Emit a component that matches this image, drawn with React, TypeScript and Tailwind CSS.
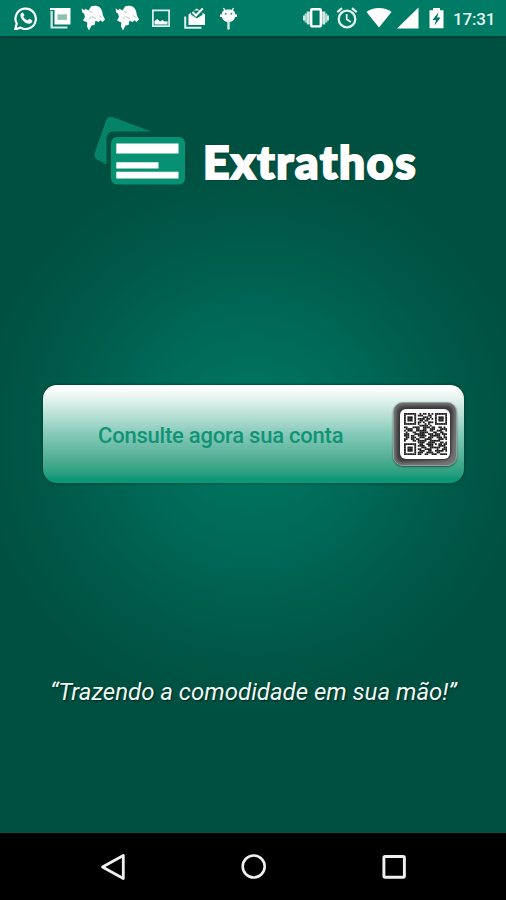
import React from 'react';

interface IconProps {
    className?: string;
}

const WhatsAppIcon: React.FC<IconProps> = ({ className }) => (
    <svg className={className} width="24" height="24" viewBox="0 0 24 24">
        <path d="M1.2 23.4 2.7 17.6A10.2 10.2 0 1 1 6.6 21.6Z" fill="none" stroke="white" strokeWidth="2.2" strokeLinejoin="round" />
        <path d="M8.3 6.7c-.6 0-1.6.9-1.6 2.5 0 3.7 4.6 8.5 8.5 8.3 1.6-.1 2.8-1.1 2.8-2.5 0-.7-.2-.8-2.5-1.8-.6-.2-.8.1-1.6 1.2-.3.4-.7.2-1.6-.3-1.400-.8-2.400-1.900-3.100-3.200-.2-.5.9-1 .9-1.800C9.900 8.500 9.300 6.700 8.300 6.700Z" fill="white" stroke="white" strokeWidth=".5" />
    </svg>
);

const NewsIcon: React.FC<IconProps> = ({ className }) => (
    <svg className={className} width="21" height="24" viewBox="0 0 21 24">
        <path d="M.5 4.5 2.800 5.200V20.600H17.500V22.500H.5Z" fill="#cfe8e1" />
        <path d="M0 2h5v2H0ZM4.500 2H20.500V18.500H4.500Z" fill="white" />
        <path d="M7.500 8.500h9.500v5H7.500Z" fill="#9fcabf" />
        <path d="M7.500 9.200h9.500M7.500 11.200h9.500M7.500 13.200h9.500" stroke="#74aea0" strokeWidth=".8" />
    </svg>
);

const BirdIcon: React.FC<IconProps> = ({ className }) => (
    <svg className={className} width="24" height="26" viewBox="0 0 24 26">
        <path d="M.7 3.300 3 5.200 4.500 3.800 7.500 5.500 10 1.500C12.500.4 16 .6 18.300 2 20.500 3.500 21.500 6.500 21.800 10L24 14.500 21.500 17 19.500 15.300 17.500 17 14.500 15.800 13.500 20 10.500 20.500 8 25.500 6 21.500 6.300 17.500 2 15.500 4 12 3 8.500 1 7.200Z" fill="white" />
        <path d="M9 6.500 11.500 7.500M7.500 14.500 10.500 11.500 15 13.500M18 10.500 21 12.500" fill="none" stroke="#9fcabf" strokeWidth=".9" />
    </svg>
);

const PictureIcon: React.FC<IconProps> = ({ className }) => (
    <svg className={className} width="18" height="24" viewBox="0 0 18 24">
        <path d="M.9 4.3H17.1V20.2H.9Z" fill="none" stroke="#e2f1ed" strokeWidth="1.7" />
        <path d="M2.5 18.500V15L5.500 13 8 15.500 10.500 14 12.500 15.500 15.500 15.200V18.500Z" fill="white" />
    </svg>
);

const InboxIcon: React.FC<IconProps> = ({ className }) => (
    <svg className={className} width="22" height="24" viewBox="0 0 22 24">
        <path d="M1.2 10.500V21.700H17.500" fill="none" stroke="#e2f1ed" strokeWidth="2" />
        <path d="M4.500 8.500 12.800 2.500 21 8.500V19H4.500Z" fill="white" />
        <path d="M7 4.500H18.500V9L12.800 13 7 9Z" fill="#007b66" />
        <path d="M6.500 9 12.800 13 19.500 9" fill="none" stroke="#e2f1ed" strokeWidth="1.300" />
        <path d="M8.500 6 12 9.500 18.800 2.500" fill="none" stroke="white" strokeWidth="2" />
    </svg>
);

const DebugIcon: React.FC<IconProps> = ({ className }) => (
    <svg className={className} width="17" height="24" viewBox="0 0 17 24">
        <path d="M3.5 2 5.300 5M13.500 2 11.700 5" stroke="white" strokeWidth="1.300" />
        <path d="M3.500 4.500C6 3 11 3 13.500 4.500 15.300 6 15.500 8 15.200 10.500 14.500 14.200 12 16 8.500 16S2.500 14.200 1.800 10.500C1.500 8 1.700 6 3.500 4.500Z" fill="white" />
        <path d="M0 8.500h2.500v2.500H0ZM14.500 8.500h2.500v2.500H14.500Z" fill="white" />
        <path d="M8.500 15.500V22.500" stroke="#cfe8e1" strokeWidth="2.500" strokeLinecap="round" />
        <circle cx="5.700" cy="7.800" r="1" fill="#3d9482" />
        <circle cx="11.300" cy="7.800" r="1" fill="#3d9482" />
    </svg>
);

const VibrateIcon: React.FC<IconProps> = ({ className }) => (
    <svg className={className} width="26" height="24" viewBox="0 0 26 24">
        <rect x="8.200" y="3.200" width="9.600" height="17.200" rx="1" fill="none" stroke="white" strokeWidth="2.400" />
        <path d="M5.300 5.500V18.500M20.700 5.500V18.500" stroke="#cfe8e1" strokeWidth="3" />
        <path d="M2.800 7.500V16.500M23.200 7.500V16.500" stroke="#b5d9cf" strokeWidth="2.200" />
        <path d="M1 9.500V14.500M25 9.500V14.500" stroke="white" strokeWidth="1.600" />
    </svg>
);

const AlarmIcon: React.FC<IconProps> = ({ className }) => (
    <svg className={className} width="22" height="24" viewBox="0 0 22 24">
        <circle cx="11" cy="13" r="8.300" fill="none" stroke="#e2f1ed" strokeWidth="2.300" />
        <path d="M1.300 6.200 6 2.200M20.700 6.200 16 2.200" stroke="#e2f1ed" strokeWidth="2.200" />
        <path d="M10.700 8V13.300L14.800 16" fill="none" stroke="#e2f1ed" strokeWidth="1.800" />
    </svg>
);

const WifiIcon: React.FC<IconProps> = ({ className }) => (
    <svg className={className} width="26" height="24" viewBox="0 0 26 24">
        <path d="M13 21.500.5 6C4 3.300 8 2 13 2S22 3.300 25.500 6Z" fill="white" />
    </svg>
);

const SignalIcon: React.FC<IconProps> = ({ className }) => (
    <svg className={className} width="22" height="24" viewBox="0 0 22 24">
        <path d="M0 22.500 21.500 1.500V22.500Z" fill="white" />
    </svg>
);

const BatteryIcon: React.FC<IconProps> = ({ className }) => (
    <svg className={className} width="15" height="24" viewBox="0 0 15 24">
        <path d="M.5 4.200H4V2H11V4.200H14.500V22.300H.5Z" fill="white" />
        <path d="M9.500 6.200 3.500 14H7L5.500 19.500 11.700 11.600H8.200Z" fill="#007b66" />
    </svg>
);

const LogoMark: React.FC<IconProps> = ({ className }) => (
    <svg className={className} width="92" height="70" viewBox="0 0 92 70">
        <path d="M57.500 15.500H20Q12.500 15.500 12.500 23V48.500L3 43.500Q-.8 41 .7 37L12.200 4Q14 -.3 18.500.9Z" fill="#058268" />
        <rect x="17" y="21" width="74" height="47.500" rx="6" fill="#079172" />
        <path d="M22.300 27.500H84.500V37.500H22.300ZM22.300 46.200H64.500V52.500H22.300ZM22.300 55.800H84.500V62.500H22.300Z" fill="white" />
    </svg>
);

const qrRows = [
    '1111111001011010101111111',
    '1000001011100011001000001',
    '1011101000011101001011101',
    '1011101011110110101011101',
    '1011101001101100001011101',
    '1000001011010011101000001',
    '1111111010001010001111111',
    '0000000001111101000000000',
    '1100011110011110110011010',
    '0111100110011001110001111',
    '1011100111111001100111001',
    '0100011001111100011001100',
    '1110001111110011101110111',
    '1110110011111001111110010',
    '0110111001110011100111011',
    '1100110110001111000011101',
    '1000011011111001111110000',
    '0000000011110011110001101',
    '1111111001100111101011011',
    '1000001011110011100011110',
    '1011101000111001111110011',
    '1011101011001111000100111',
    '1011101001110011001111101',
    '1000001011100111100110000',
    '1111111011001100111001111',
];

const QrCode: React.FC = () => (
    <svg width="43" height="42" viewBox="0 0 25 25" preserveAspectRatio="none">
        {qrRows.map((row, y) =>
            row.split('').map((cell, x) =>
                cell === '1' ? <rect key={`${x}-${y}`} x={x} y={y} width="1.05" height="1.05" fill="#1c1c1c" /> : null
            )
        )}
    </svg>
);

const StatusBar: React.FC = () => (
    <header className="z-10 flex h-[36px] shrink-0 justify-between bg-[#007b66] pl-3.5 pr-2.5 pt-1.5 shadow-[0_1px_3px_rgba(0,40,30,0.6)]">
        <div className="flex items-start">
            <WhatsAppIcon />
            <NewsIcon className="ml-3" />
            <BirdIcon className="-mt-px ml-2.5" />
            <BirdIcon className="-mt-px ml-2.5" />
            <PictureIcon className="ml-[13px]" />
            <InboxIcon className="ml-3.5" />
            <DebugIcon className="ml-3.5" />
        </div>
        <div className="flex items-start">
            <VibrateIcon />
            <AlarmIcon className="ml-[7px]" />
            <WifiIcon className="ml-2" />
            <SignalIcon className="ml-[5px]" />
            <BatteryIcon className="ml-2.5" />
            <span className="ml-[9px] w-[43px] whitespace-nowrap pt-px text-[17px] font-medium leading-6 tracking-[-0.2px] text-[#e6f4f0]">17:31</span>
        </div>
    </header>
);

const NavigationBar: React.FC = () => (
    <nav className="flex h-[67px] shrink-0 items-center justify-between bg-black pl-[100px] pr-[99px]">
        <svg width="26" height="28" viewBox="0 0 26 28" fill="none" stroke="#f0f0f0" strokeWidth="2.8" strokeLinejoin="round">
            <path d="M2.5 14 23.300 2.500V25.500Z" />
        </svg>
        <svg width="26" height="26" viewBox="0 0 26 26" fill="none" stroke="#f0f0f0" strokeWidth="2.6">
            <circle cx="12.700" cy="12.500" r="11" />
        </svg>
        <svg width="26" height="26" viewBox="0 0 26 26" fill="none" stroke="#f0f0f0" strokeWidth="2.9">
            <rect x="2.900" y="2.500" width="20.500" height="20.800" rx="1.200" />
        </svg>
    </nav>
);

const App: React.FC = () => {
    return (
        <div className="flex h-[900px] w-[506px] flex-col overflow-hidden bg-[#005041] font-['Roboto',sans-serif]">
            <StatusBar />
            <main className="flex min-h-0 flex-1 flex-col bg-[radial-gradient(circle_at_253px_399px,#007561_0px,#00715e_60px,#006655_130px,#005a49_200px,#005041_280px)]">
                <div className="flex pl-[94px] pt-[80px]">
                    <LogoMark />
                    <h1 className="ml-[17px] mt-[16px] whitespace-nowrap font-['Lato',sans-serif] text-[46px] font-black leading-[60px] tracking-[1.7px] text-white [-webkit-text-stroke:2.2px_white] [text-shadow:1px_1px_2px_rgba(0,30,20,0.7)]">Extrathos</h1>
                </div>
                <button className="ml-[43px] mt-[193px] flex h-[98px] w-[421px] shrink-0 items-center rounded-[14px] bg-linear-to-b from-white from-3% via-[#85cab9] via-50% to-[#0a9877] to-96% pl-[55px] shadow-[0_0_3px_rgba(0,35,25,0.8)]">
                    <span className="w-[248px] whitespace-nowrap pt-0.5 text-left text-[22px] font-medium tracking-[-0.22px] text-[#129376]">Consulte agora sua conta</span>
                    <span className="ml-[47px] flex size-[64px] items-center justify-center rounded-[10px] border border-[#999] bg-linear-to-br from-[#4a4a4d] via-[#424245] to-[#77777a] shadow-[inset_0_0_3px_2px_#777,0_1px_2px_rgba(0,0,0,0.5)]">
                        <span className="flex size-[50px] items-center justify-center rounded-[6px] bg-white shadow-[0_0_2px_1px_#333]">
                            <QrCode />
                        </span>
                    </span>
                </button>
                <p className="mt-[191px] whitespace-nowrap pl-[50px] text-[24px] italic leading-9 text-[#eef8f5] [text-shadow:1px_1px_2px_rgba(0,25,20,0.8)]">“Trazendo a comodidade em sua mão!”</p>
            </main>
            <NavigationBar />
        </div>
    );
};

export default App;
